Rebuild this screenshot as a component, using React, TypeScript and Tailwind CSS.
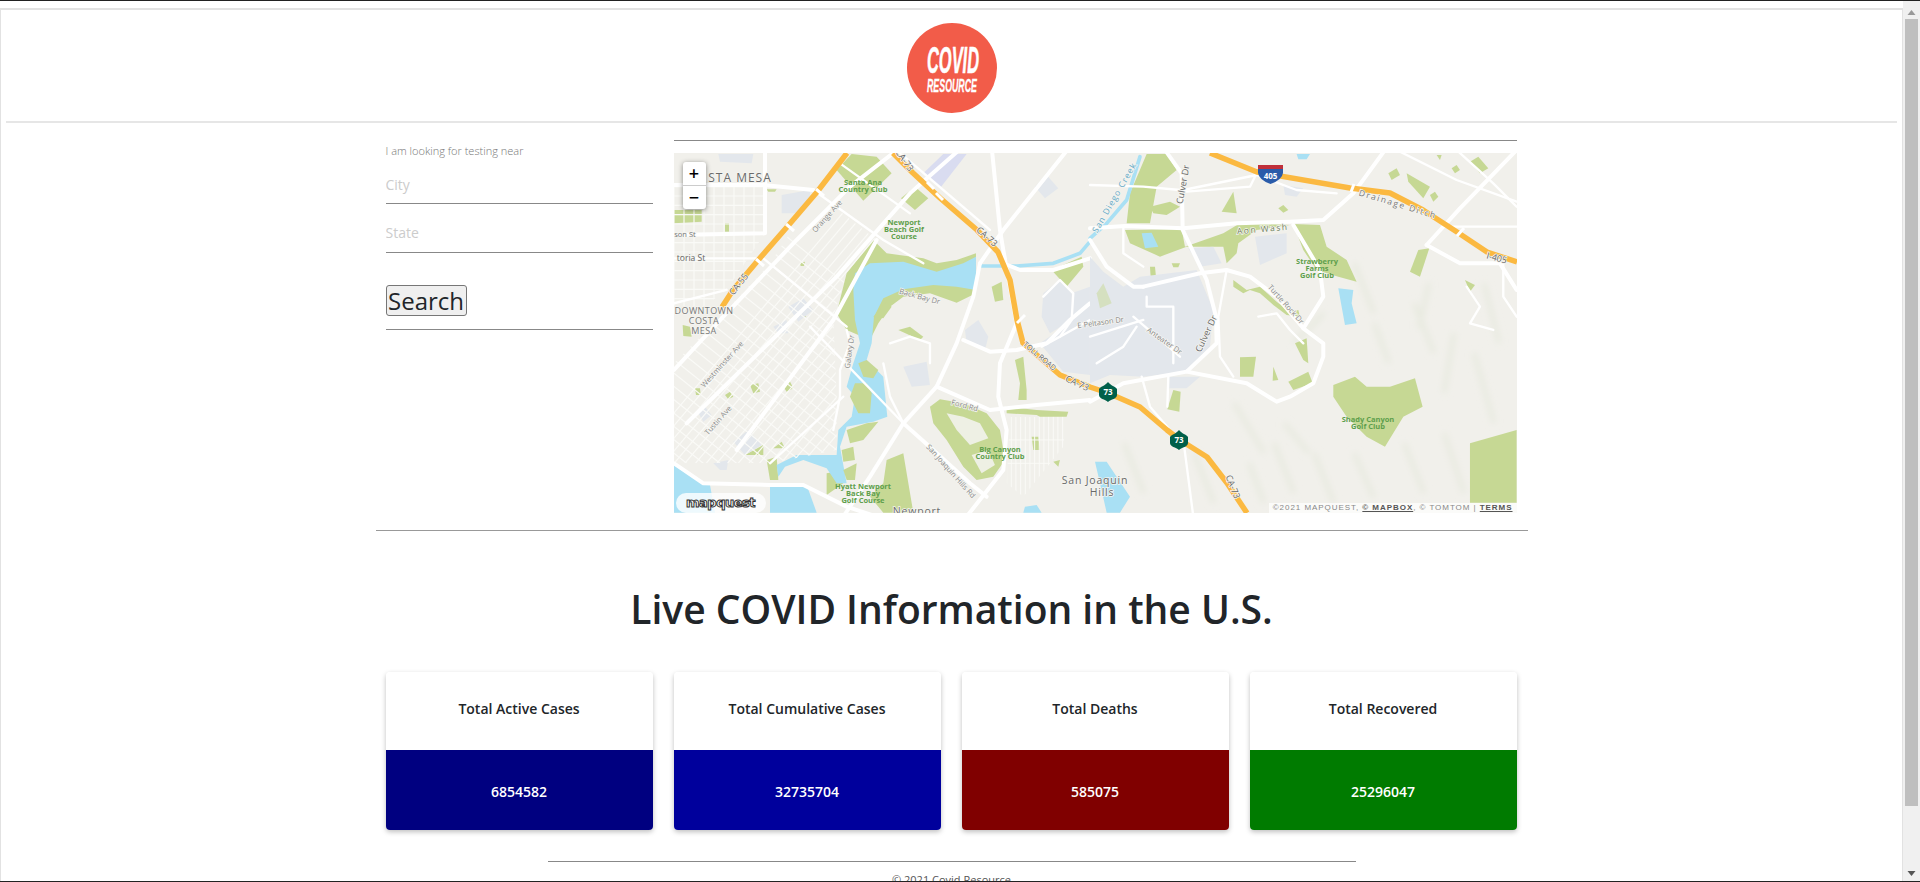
const stats = [
  { title: "Total Active Cases", value: "6854582", color: "bg-[#000080]" },
  { title: "Total Cumulative Cases", value: "32735704", color: "bg-[#00009c]" },
  { title: "Total Deaths", value: "585075", color: "bg-[#800000]" },
  { title: "Total Recovered", value: "25296047", color: "bg-[#007b00]" },
];

// west half of the map, traced at 3x
const westGreens = [
  "12,240 95,240 95,275 12,280",
  "165,280 177,280 177,305 165,305",
  "500,120 545,72 620,80 665,130 580,212",
  "693,205 735,170 775,205 735,240",
  "290,178 320,178 315,185 295,185",
  "610,330 650,370 760,385 800,400 860,390 918,370 918,490 860,518 780,490 700,500 660,530 625,580 600,630 530,600 500,550 530,430",
  "685,600 720,590 760,620 750,630",
  "965,470 995,455 1000,510 975,515",
  "780,830 810,808 880,820 950,850 990,900 1005,990 970,1040 920,1050 880,1010 830,930 790,880",
  "650,990 700,970 730,1148 640,1148 600,1100 640,1060",
  "470,1030 495,1025 520,1060 470,1095",
  "290,990 320,980 325,1050 300,1050",
  "225,975 280,945 280,975",
  "310,955 335,935 345,955",
  "1035,690 1060,680 1070,780 1070,810 1045,810 1050,760",
  "1085,920 1105,920 1110,960 1090,960",
  "1150,995 1170,990 1165,1010",
  "240,765 265,760 270,785 250,790",
  "340,770 355,745 370,775 350,785",
  "165,795 180,785 190,800 175,808",
  "75,775 90,775 92,795 78,795",
  "38,585 60,590 65,620 40,618",
  "390,552 405,545 408,560 395,562",
  "390,398 405,395 402,408 392,408",
  "1145,420 1235,380 1240,410 1190,470",
  "1010,830 1100,840 1195,845 1190,860 1110,860 1100,855 1010,850",
];

// pale fairway gaps inside the Big Canyon course
const westFairways = [
  "830,850 880,860 930,880 955,925 900,945 860,900",
  "905,975 955,960 975,1005 935,1030",
];

const westGrays = [
  "145,72 250,72 245,100 150,95",
  "335,195 420,180 420,210 385,250 335,250",
  "1095,170 1130,135 1165,175 1125,205",
  "355,530 400,505 430,540 385,575",
  "700,710 770,695 780,765 725,770",
  "885,600 925,570 955,620 945,660 890,640",
  "190,935 235,900 275,945 225,975",
  "80,840 105,830 125,855 100,875",
  "1120,490 1170,450 1205,490 1205,570 1140,610 1115,560",
  "1205,490 1260,470 1260,735 1180,725 1110,640 1205,575",
  "130,1000 175,990 170,1020 150,1020",
  "310,590 350,570 355,610 325,610",
];

const westWaters = [
  "555,430 600,400 700,395 800,425 880,400 918,380 918,480 860,470 790,465 700,478 640,505 612,560 605,640 590,690 640,740 652,860 610,875 530,890 510,950 530,1060 500,1060 470,1015 400,990 345,1010 325,1040 320,1005 380,975 500,975 505,900 545,860 555,800 530,770 550,700 570,640 555,570 550,480",
  "12,1005 50,1030 120,1065 135,1148 12,1148",
  "300,1065 410,1065 440,1148 300,1148",
  "1065,1130 1100,1125 1115,1148 1060,1148",
];

// islands sit on top of the water
const westIslands = [
  "610,560 650,515 665,530 640,565",
  "565,700 590,690 625,720 610,745 580,740",
  "555,760 590,760 605,790 600,850 565,850 540,800",
  "530,900 590,880 625,875 580,930 540,940",
  "515,960 550,950 555,990 520,995",
  "520,1020 560,1000 555,1050 530,1050",
];

const westMajor = [
  "12,165 280,165 430,180",
  "12,720 160,560 380,330 540,170 720,30",
  "50,880 500,440 720,190 890,40",
  "200,960 490,570 620,330",
  "930,400 910,500 860,640 800,770 700,880 600,1040 520,1160",
  "1200,50 1000,300 930,400",
  "965,50 990,300 1000,360 1040,580 990,700 985,800 1010,900 1000,1020 890,1160",
  "800,770 960,840 1100,825 1260,810",
  "880,630 960,665 1040,660 1130,640 1200,570 1260,520",
  "700,880 790,960 900,1060 950,1100",
  "12,1000 100,1060 300,1065 400,1065 530,1130 620,1160",
  "1000,400 1050,420 1150,420 1260,385",
  "285,50 285,310 12,315",
];

const westMinor = [
  "12,385 260,385",
  "280,385 530,590",
  "430,180 640,330 760,400",
  "510,100 720,250",
  "680,60 960,300",
  "660,640 720,620 780,640 780,700",
  "530,600 540,640 510,720 510,800 490,900",
  "1120,500 1170,450 1210,490 1205,570 1170,620 1115,650",
  "1170,620 1260,570",
  "420,590 700,880",
  "300,1000 520,800",
  "12,520 170,480",
  "640,700 660,800 700,880",
];

const eastGreens = [
  "170,72 230,72 260,120 200,170 180,280 110,280 120,190",
  "180,230 240,215 270,230 230,255 190,250",
  "105,300 275,298 285,350 400,310 450,280 600,285 500,300 445,340 440,370 410,400 400,350 290,350 210,380 120,340",
  "395,245 430,185 440,250",
  "610,282 690,285 710,350 770,390 800,455 745,440 680,420 640,360",
  "895,130 920,115 930,135 905,150",
  "950,130 1020,170 1000,205 955,155",
  "1085,115 1100,105 1110,120 1095,130",
  "1140,95 1165,80 1195,115 1170,130",
  "1020,195 1035,185 1045,200 1030,215",
  "1040,75 1055,75 1050,90",
  "985,360 1018,355 990,440 960,425",
  "1125,450 1155,465 1140,485",
  "565,235 580,225 595,240 580,248",
  "180,410 195,410 198,440 182,440",
  "245,400 270,400 265,412 250,412",
  "450,682 498,680 490,740 450,740",
  "550,710 565,750 548,752",
  "595,755 655,725 668,760 610,780",
  "615,640 650,625 655,700 640,690",
  "430,450 470,480 510,470 560,515 600,545 625,540 630,560 590,555 550,525 510,490 480,480 460,490 430,470",
  "250,780 272,785 268,845 232,838",
  "730,765 795,740 830,770 900,770 975,745 998,830 940,860 885,950 830,920 770,860 730,800",
  "1140,940 1280,900 1280,1118 1140,1118",
];

const eastGrays = [
  "0,380 40,425 100,470 150,440 320,420 370,540 360,650 285,725 160,740 60,735 0,760",
  "295,355 370,350 395,400 330,410",
  "495,320 590,310 590,370 510,405",
  "238,740 330,740 290,775 238,775",
  "580,165 640,175 620,200 585,195",
];

const eastWaters = [
  "155,310 185,308 205,350 165,355",
  "745,475 790,480 785,520 800,580 765,585 755,530",
  "15,995 50,995 120,1100 90,1148 50,1148 30,1060",
  "620,72 660,72 650,88 625,88",
];

const eastMajor = [
  "0,295 105,288 280,295 440,280 600,275 700,270 790,190 885,60",
  "225,60 275,130 278,300 350,450 378,560 380,640 290,725 100,760 0,815",
  "290,725 470,760 560,815 600,800 670,760 700,680 700,640 640,595 700,500 690,420 610,285",
  "160,470 330,430 410,420 480,440 560,500 640,595",
  "1010,345 1110,235 1280,60",
  "1010,345 1110,400 1230,400 1280,480",
  "0,330 50,410 130,470 160,470",
];

const eastMinor = [
  "410,420 385,560 390,680 430,740",
  "100,290 100,370 160,410",
  "0,165 160,170 270,180",
  "280,180 500,135 620,180 740,190",
  "500,130 480,170 290,185",
  "920,60 1100,150 1280,215",
  "1100,60 1210,160 1280,230",
  "1060,290 1280,290",
  "1240,400 1240,500 1280,560",
  "155,740 180,830 240,900",
  "235,740 232,830",
  "280,930 310,1160",
  "1130,470 1170,530 1140,580 1210,600",
  "505,560 560,550 600,600 640,640",
  "0,620 160,570",
  "170,500 170,530 250,530 250,700",
  "20,700 100,650 140,590",
  "130,560 270,680",
];

const labels: [string, number, number, number, string, number, number][] = [
  ["STA MESA", 66, 29, 12, "#6a6a6a", 0, 1],
  ["DOWNTOWN", 30, 161, 9, "#777", 0, 0.4],
  ["COSTA", 30, 171, 9, "#777", 0, 0.4],
  ["MESA", 30, 181, 9, "#777", 0, 0.4],
  ["toria St", 17, 108, 8.5, "#666", 0, 0],
  ["son St", 11, 84, 7.5, "#777", 0, 0],
  ["Orange Ave", 155, 65, 7.5, "#888", -48, 0],
  ["Westminster Ave", 50, 213, 7.5, "#888", -48, 0],
  ["Tustin Ave", 46, 269, 7.5, "#888", -48, 0],
  ["Galaxy Dr", 178, 199, 7.5, "#888", -82, 0],
  ["Back Bay Dr", 245, 146, 7.5, "#888", 15, 0],
  ["Ford Rd", 290, 255, 7.5, "#888", 15, 0],
  ["San Joaquin Hills Rd", 275, 320, 7.5, "#888", 48, 0],
  ["E Peltason Dr", 427, 172, 7.5, "#888", -8, 0],
  ["Anteater Dr", 489, 190, 7.5, "#888", 35, 0],
  ["Culver Dr", 535, 182, 9, "#666", -65, 0],
  ["Culver Dr", 512, 32, 9, "#666", -80, 0],
  ["Turtle Rock Dr", 610, 153, 7.5, "#888", 48, 0],
  ["San Diego Creek", 443, 46, 8.5, "#64a9c6", -60, 1],
  ["Aon Wash", 589, 79, 8.5, "#6f7f5c", -5, 1.5],
  ["Drainage Ditch", 723, 54, 8.5, "#777", 17, 1.6],
  ["San Joaquin", 421, 331, 10.5, "#6a6a6a", 0, 0.8],
  ["Hills", 428, 343, 10.5, "#6a6a6a", 0, 0.8],
  ["Newport", 243, 362, 10.5, "#6a6a6a", 0, 0.8],
  ["CA-55", 67, 133, 9, "#666", -52, 0],
  ["CA-73", 311, 86, 9, "#666", 42, 0],
  ["CA-73", 228, 9, 9, "#666", 55, 0],
  ["TOLL ROAD", 364, 205, 7.5, "#666", 40, 0],
  ["CA-73", 402, 233, 9, "#666", 25, 0],
  ["CA-73", 556, 335, 9, "#666", 68, 0],
  ["I-405", 822, 108, 9, "#666", 15, 0],
];

const golf: [number, number[], string[]][] = [
  [189, [32, 39], ["Santa Ana", "Country Club"]],
  [230, [72, 79, 86], ["Newport", "Beach Golf", "Course"]],
  [326, [299, 306], ["Big Canyon", "Country Club"]],
  [189, [336, 343, 350], ["Hyatt Newport", "Back Bay", "Golf Course"]],
  [643, [111, 118, 125], ["Strawberry", "Farms", "Golf Club"]],
  [694, [269, 276], ["Shady Canyon", "Golf Club"]],
];

const Polys = ({ list, fill }: { list: string[]; fill: string }) => (
  <>
    {list.map((p) => (
      <polygon key={p} points={p} fill={fill} />
    ))}
  </>
);

const Lines = ({ list, width, color = "#fff" }: { list: string[]; width: number; color?: string }) => (
  <>
    {list.map((p) => (
      <polyline key={p} points={p} fill="none" stroke={color} strokeWidth={width} strokeLinejoin="round" strokeLinecap="round" />
    ))}
  </>
);

const Shield = ({ x, y }: { x: number; y: number }) => (
  <g>
    <path
      d={`M${x - 9} ${y - 3} C${x - 7} ${y - 6} ${x - 3} ${y - 6} ${x} ${y - 10} C${x + 3} ${y - 6} ${x + 7} ${y - 6} ${x + 9} ${y - 3} L${x + 9} ${y + 3} C${x + 9} ${y + 7} ${x + 3} ${y + 7} ${x} ${y + 10} C${x - 3} ${y + 7} ${x - 9} ${y + 7} ${x - 9} ${y + 3} Z`}
      fill="#00604a"
    />
    <text x={x} y={y + 3} fontSize="8" fontWeight="700" fill="#fff" textAnchor="middle" fontFamily="'Open Sans', sans-serif">
      73
    </text>
  </g>
);

const MapArt = () => (
  <svg className="block h-full w-full" viewBox="0 0 843 360">
    <defs>
      <clipPath id="orthoGrid">
        <polygon points="12,170 285,170 285,310 170,480 100,530 12,530" />
      </clipPath>
      <clipPath id="diagGrid">
        <polygon points="300,400 440,190 620,330 530,430 490,560 500,800 500,960 300,1000 12,1000 12,700 170,540" />
      </clipPath>
      <clipPath id="tractGrid">
        <polygon points="1020,860 1190,860 1180,950 1060,1100 1010,1060" />
      </clipPath>
      <filter id="soft">
        <feGaussianBlur stdDeviation="3" />
      </filter>
    </defs>
    <rect width="843" height="360" fill="#f1f0eb" />

    {/* faint hill shading on the east side */}
    <g filter="url(#soft)" stroke="#e8eae0" strokeWidth="5" fill="none">
      <path d="M560 250 L590 300 M600 290 L620 340 M640 300 L660 350 M740 150 L760 200 M780 180 L770 240 M800 200 L820 270 M770 280 L790 340 M520 300 L540 350 M450 290 L470 340 M730 290 L750 340 M680 110 L700 160 M620 190 L650 160 M700 170 L715 210 M755 130 L745 175 M810 130 L825 190 M575 310 L590 350 M680 300 L700 345 M610 270 L635 300" />
    </g>

    <g transform="translate(-4 -23) scale(0.3333)">
      <Polys list={westGreens} fill="#c6d894" />
      <Polys list={westFairways} fill="#eef0e4" />
      <Polys list={westGrays} fill="#e3e7ec" />
      <polygon points="760,130 820,72 890,72 810,175" fill="#d9dcf0" />
      <Polys list={westWaters} fill="#a9e0f4" />
      <Polys list={westIslands} fill="#c6d894" />
      <Lines list={["935,408 1040,408 1150,400 1230,370 1260,335"]} width={11} color="#a9e0f4" />

      <g clipPath="url(#orthoGrid)" stroke="#fafaf7" strokeWidth="3.500">
        {Array.from({ length: 10 }, (_, i) => (
          <line key={i} x1={12 + i * 30} y1={170} x2={12 + i * 30} y2={530} />
        ))}
        {Array.from({ length: 13 }, (_, i) => (
          <line key={i} x1={12} y1={170 + i * 28} x2={290} y2={170 + i * 28} />
        ))}
      </g>
      <g clipPath="url(#diagGrid)" stroke="#fafaf7" strokeWidth="3.500">
        {Array.from({ length: 50 }, (_, i) => (
          <line key={i} x1={-200 + i * 32} y1={1100} x2={560 + i * 32} y2={200} />
        ))}
        {Array.from({ length: 44 }, (_, i) => (
          <line key={i} x1={-300} y1={-200 + i * 40} x2={700} y2={600 + i * 40} />
        ))}
      </g>
      <g clipPath="url(#tractGrid)" stroke="#fafaf7" strokeWidth="3">
        {Array.from({ length: 14 }, (_, i) => (
          <line key={i} x1={1010 + i * 14} y1={850} x2={1010 + i * 14} y2={1100} />
        ))}
        <line x1={1000} y1={930} x2={1200} y2={930} />
        <line x1={1000} y1={1000} x2={1200} y2={1000} />
      </g>

      <Lines list={westMinor} width={7} />
      <Lines list={westMajor} width={12} />
    </g>

    <g transform="translate(416 -23) scale(0.3333)">
      <Polys list={eastGreens} fill="#c6d894" />
      <Polys list={eastGrays} fill="#e3e7ec" />
      <polygon points="20,490 40,460 65,520 30,535" fill="#d5e0c0" />
      <Polys list={eastWaters} fill="#a9e0f4" />
      <Lines list={["0,325 50,280 110,210 150,80"]} width={11} color="#a9e0f4" />
      <Lines list={eastMinor} width={7} />
      <Lines list={eastMajor} width={12} />
    </g>

    <g stroke="#fbb941" strokeWidth="5.500" fill="none" strokeLinejoin="round">
      <polyline points="48,154 59,137 86,105 113,74 143,39 173,0" />
      <polyline points="219,0 239,20 266,45 303,77 324,99 336,127 343,167 349,190 386,222 416,234 434,240 466,254 493,277 506,287 533,304 553,330 573,360" />
      <polyline points="536,0 583,19 676,35 716,40 749,57 783,79 813,99 843,109" />
    </g>
    {/* overpass breaks in the highways */}
    <g stroke="#fff" strokeWidth="3" fill="none">
      <path d="M82 106 L90 113 M112 71 L120 78 M142 36 L150 43 M253 29 L260 36 M262 40 L269 47 M343 170 L351 162 M677 39 L680 31 M783 83 L790 75" />
    </g>

    {labels.map(([t, x, y, s, c, r, ls], i) => (
      <text
        key={i}
        x={x}
        y={y}
        fontSize={s}
        fill={c}
        letterSpacing={ls}
        textAnchor="middle"
        transform={r ? `rotate(${r} ${x} ${y})` : undefined}
        fontFamily="'Open Sans', sans-serif"
        stroke="#f5f5f1"
        strokeWidth="1.500"
        paintOrder="stroke"
      >
        {t}
      </text>
    ))}
    {golf.map(([x, ys, lines]) =>
      lines.map((t, i) => (
        <text
          key={t}
          x={x}
          y={ys[i]}
          fontSize="7.500"
          fontWeight="700"
          fill="#5e9f4c"
          textAnchor="middle"
          fontFamily="'Open Sans', sans-serif"
        >
          {t}
        </text>
      )),
    )}

    <Shield x={434} y={239} />
    <Shield x={505} y={287} />
    <path d="M584 12 L609 12 L609 20 Q608 27 596.500 31 Q585 27 584 20 Z" fill="#2a5caa" />
    <path d="M584 12 L609 12 L609 16 L584 16 Z" fill="#c0303a" />
    <text x="596.500" y="26" fontSize="8" fontWeight="700" fill="#fff" textAnchor="middle" fontFamily="'Open Sans', sans-serif">
      405
    </text>
  </svg>
);

const Logo = () => (
  <svg className="block h-[90px] w-[90px]" viewBox="0 0 90 90">
    <circle cx="45" cy="45" r="45" fill="#f25c49" />
    <text
      x="46"
      y="50"
      fontSize="36"
      fontWeight="700"
      fontStyle="italic"
      fill="#fff"
      stroke="#fff"
      strokeWidth="0.6"
      textAnchor="middle"
      textLength="52"
      lengthAdjust="spacingAndGlyphs"
      fontFamily="'Liberation Sans', sans-serif"
    >
      COVID
    </text>
    <text
      x="45"
      y="69"
      fontSize="18"
      fontWeight="700"
      fontStyle="italic"
      fill="#fff"
      stroke="#fff"
      strokeWidth="0.3"
      textAnchor="middle"
      textLength="50"
      lengthAdjust="spacingAndGlyphs"
      fontFamily="'Liberation Sans', sans-serif"
    >
      RESOURCE
    </text>
  </svg>
);

const App = () => {
  return (
    <div className="flex h-[882px] w-full flex-col overflow-hidden bg-white font-['Open_Sans',sans-serif] text-[#212529]">
      <div className="h-px shrink-0 bg-[#222]"></div>
      <div className="flex min-h-0 flex-1">
        <div className="min-w-0 flex-1 overflow-hidden pt-[7px]">
          <div className="h-full border-x border-t-2 border-[#e2e2e2] px-[5px]">
            <div className="flex h-[113px] justify-center border-b-2 border-[#e6e6e6] pt-[13px]">
              <Logo />
            </div>

            <div className="mx-auto w-[1152px] pt-[17px]">
              <div className="flex gap-[21px] border-b border-[#999] px-[10px] pb-[17px]">
                <div className="w-[267px] shrink-0">
                  <p className="pt-[3px] text-[11px] font-light leading-[16px] text-[#777]">I am looking for testing near</p>
                  <input
                    className="mt-[1px] block h-[44px] w-full border-b border-[#888] pt-[6px] text-[14px] outline-none placeholder:text-[#ccc]"
                    placeholder="City"
                  />
                  <input
                    className="mt-[13px] block h-[36px] w-full border-b border-[#888] pb-[5px] text-[14px] outline-none placeholder:text-[#ccc]"
                    placeholder="State"
                  />
                  <button className="mt-[32px] block h-[31px] w-[81px] rounded-[3px] border border-[#767676] bg-[#efefef] text-[24px] leading-none">
                    Search
                  </button>
                  <div className="mt-[13px] h-px bg-[#888]"></div>
                </div>
                <div className="w-[843px] shrink-0">
                  <div className="h-px bg-[#888]"></div>
                  <div className="relative mt-3 h-[360px] w-[843px] overflow-hidden">
                    <MapArt />
                    <div className="absolute left-[9px] top-[9px] flex w-[23px] flex-col rounded-[3px] bg-white text-center text-[18px] font-semibold leading-[23px] text-black shadow-[0_1px_5px_rgba(0,0,0,0.45)]">
                      <span className="h-6 border-b border-[#ccc]">+</span>
                      <span className="h-[23px]">−</span>
                    </div>
                    <div className="absolute bottom-0 left-[2px] flex h-5 w-[90px] items-center justify-center rounded-full bg-white/80 font-['DejaVu_Sans',sans-serif] text-[13px] font-bold tracking-[-0.5px] text-white [-webkit-text-stroke:1px_#333]">
                      mapquest
                    </div>
                    <div className="absolute bottom-0 right-0 bg-white/70 px-1 font-['Liberation_Sans',sans-serif] text-[8px] leading-[10px] tracking-[0.95px] text-[#888]">
                      ©2021 MAPQUEST, <span className="font-bold text-[#555] underline">© MAPBOX</span>, © TOMTOM | <span className="font-bold text-[#555] underline">TERMS</span>
                    </div>
                  </div>
                </div>
              </div>

              <h1 className="pt-[51px] text-center text-[39px] font-semibold leading-[54px] text-[#212529]">Live COVID Information in the U.S.</h1>

              <div className="mt-[36px] grid grid-cols-[repeat(4,267px)] gap-[21px] px-[10px]">
                {stats.map((s) => (
                  <div key={s.title} className="overflow-hidden rounded-[4px] shadow-[0_2px_5px_rgba(0,0,0,0.25)]">
                    <div className="flex h-[78px] items-center justify-center bg-white pb-[5px] text-[14px] font-semibold">{s.title}</div>
                    <div className={`flex h-[80px] items-center justify-center pt-[2px] text-[14px] font-semibold text-white ${s.color}`}>{s.value}</div>
                  </div>
                ))}
              </div>

              <div className="mx-auto mt-[31px] w-[808px] border-t border-[#888] pt-[10px] text-center text-[11px] text-[#555]">© 2021 Covid Resource</div>
            </div>
          </div>
        </div>

        <div className="flex w-[17px] shrink-0 flex-col items-center bg-[#f0f0f0] pt-[7px]">
          <svg className="h-[9px] w-[9px] shrink-0" viewBox="0 0 9 9">
            <path d="M4.500 2 L8.500 7 L0.500 7 Z" fill="#999" />
          </svg>
          <div className="mt-[2px] h-[787px] w-[13px] bg-[#bfbfbf]"></div>
          <div className="flex-1"></div>
          <svg className="mb-[3px] h-[9px] w-[9px] shrink-0" viewBox="0 0 9 9">
            <path d="M0.500 2 L8.500 2 L4.500 7 Z" fill="#555" />
          </svg>
        </div>
      </div>
      <div className="h-px shrink-0 bg-[#222]"></div>
    </div>
  );
};

export default App;
